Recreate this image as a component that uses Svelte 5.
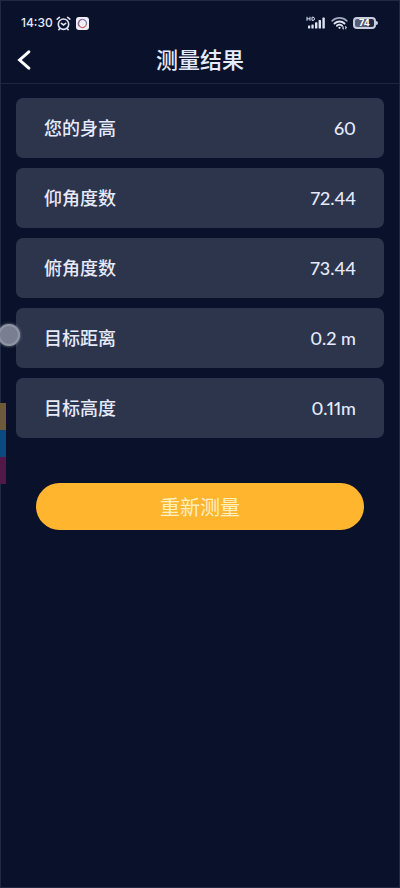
<script>
  const rows = [
    { label: '您的身高', value: '60' },
    { label: '仰角度数', value: '72.44' },
    { label: '俯角度数', value: '73.44' },
    { label: '目标距离', value: '0.2 m' },
    { label: '目标高度', value: '0.11m' }
  ];
</script>

<div class="screen">
  <div class="status">
    <div class="group">
      <span class="time">14:30</span>
      <svg width="15" height="15" viewBox="0 0 15 15" fill="none" stroke="#dfe3f2" stroke-linecap="round">
        <circle cx="7.5" cy="8.2" r="5.2" stroke-width="1.6" />
        <path d="M1.2 3.2 3.4 1.4M13.8 3.2 11.6 1.4M3.8 12.5l-1 1.2M11.2 12.5l1 1.2" stroke-width="1.6" />
        <path d="M5.4 7.4 7.5 9l2.2-1.6" stroke-width="1.6" />
      </svg>
      <svg class="app" width="13" height="13" viewBox="0 0 13 13" fill="none">
        <rect width="13" height="13" rx="3" fill="#f1eff6" />
        <path d="M6.5 2.4a4.1 4.1 0 0 0-2.9 7" stroke="#8f5f92" stroke-width="1.4" />
        <path d="M6.5 2.4a4.1 4.1 0 0 1 4 4.6" stroke="#6d79b4" stroke-width="1.2" />
        <path d="M3.6 9.4a4.1 4.1 0 0 0 6.9-2.4" stroke="#c96a70" stroke-width="1.3" />
      </svg>
    </div>
    <div class="group right">
      <svg width="20" height="14" viewBox="0 0 20 14" fill="#dfe3f2">
        <path d="M1 .8v4M4 .8v4M1 2.8h3M6 1.2v3.2h.9a1.6 1.6 0 0 0 0-3.2z" fill="none" stroke="#dfe3f2" stroke-width="1" />
        <rect x="2" y="9.6" width="2.2" height="2.9" rx=".6" />
        <rect x="5.4" y="8.4" width="2.3" height="4.1" rx=".6" />
        <rect x="9" y="6.2" width="2.4" height="6.3" rx=".6" />
        <rect x="12.6" y="4" width="2.4" height="8.5" rx=".6" />
        <rect x="16.4" y="1.6" width="2.4" height="10.9" rx=".6" />
      </svg>
      <svg width="17" height="14" viewBox="0 0 17 14" fill="none" stroke="#dfe3f2" stroke-linecap="round">
        <path d="M1.2 4.8a10.4 10.4 0 0 1 14.6 0" stroke="#9fa6bd" stroke-width="1.7" />
        <path d="M3.5 7.5a7.2 7.2 0 0 1 10 0" stroke-width="1.9" />
        <path d="M5.9 9.8a4 4 0 0 1 5.2 0" stroke-width="1.8" />
        <circle cx="8.5" cy="11.8" r="1.1" fill="#dfe3f2" stroke="none" />
        <path d="M12.2 10.8v2M12.2 12.8l-.6-.6M14.8 12.8v-2M14.8 10.8l.6.6" stroke-width="1" />
      </svg>
      <div class="battery"><span>74</span></div>
    </div>
  </div>

  <header>
    <button class="back" aria-label="返回">
      <svg width="14" height="20" viewBox="0 0 14 20" fill="none" stroke="#fff" stroke-width="3" stroke-linecap="round">
        <path d="M11.8 1.8 2.6 10l9.2 8.2" />
      </svg>
    </button>
    <h1>测量结果</h1>
  </header>

  <main>
    <dl>
      {#each rows as row}
        <div class="row">
          <dt>{row.label}</dt>
          <dd>{row.value}</dd>
        </div>
      {/each}
    </dl>
    <button class="again">重新测量</button>
  </main>

  <div class="touch"></div>
  <div class="strip"><i></i><i></i><i></i></div>
</div>

<style>
  :global(body) {
    background: #09122a;
  }
  .screen {
    position: relative;
    min-height: 100vh;
    overflow: hidden;
    background: #09122a;
    box-shadow: inset 0 0 0 1px #202a42;
    color: #e6eafa;
    font-family: Lato, "Noto Sans CJK SC", sans-serif;
  }
  .status {
    display: flex;
    justify-content: space-between;
    align-items: center;
    height: 46px;
    padding: 0 24px 0 21px;
  }
  .group {
    display: flex;
    align-items: center;
    gap: 3px;
  }
  .right {
    gap: 5px;
  }
  .time {
    font: 500 12px/16px Inter, sans-serif;
  }
  .app {
    margin-left: 2px;
  }
  .battery {
    position: relative;
    box-sizing: border-box;
    width: 23px;
    height: 12px;
    border: 2px solid #c9cede;
    border-radius: 4px;
    background: linear-gradient(90deg, #565e77 74%, #202a42 74%);
    font: 700 9px/8px Inter, sans-serif;
    text-align: center;
    color: #fff;
  }
  .battery::after {
    content: "";
    position: absolute;
    right: -4px;
    top: 2px;
    width: 2px;
    height: 4px;
    border-radius: 0 2px 2px 0;
    background: #c9cede;
  }
  header {
    display: grid;
    grid-template-columns: 48px 1fr 48px;
    align-items: center;
    height: 38px;
    padding-bottom: 9px;
    border-bottom: 1px solid #1d2742;
    box-sizing: border-box;
  }
  button {
    border: 0;
    cursor: pointer;
    font-family: inherit;
  }
  .back {
    display: flex;
    padding: 0 17px;
    background: none;
  }
  h1 {
    margin: 0;
    font-size: 22px;
    line-height: 28px;
    font-weight: 500;
    text-align: center;
  }
  main {
    padding: 14px 16px 0;
  }
  dl {
    display: flex;
    flex-direction: column;
    gap: 10px;
    margin: 0;
  }
  .row {
    display: flex;
    justify-content: space-between;
    align-items: center;
    height: 60px;
    padding: 0 28px;
    border-radius: 7px;
    background: #2d354d;
  }
  dt, dd {
    margin: 0;
    font-size: 18px;
    line-height: 28px;
    font-weight: 500;
  }
  dd {
    font-variant-numeric: proportional-nums;
  }
  .again {
    display: block;
    width: calc(100% - 40px);
    height: 47px;
    margin: 45px auto 0;
    border-radius: 24px;
    background: #ffb52e;
    color: #fff0c4;
    font-size: 20px;
    line-height: 28px;
  }
  .touch {
    position: absolute;
    left: -2px;
    top: 324px;
    width: 22px;
    height: 22px;
    box-sizing: border-box;
    border: 2px solid #8f95a5;
    border-radius: 50%;
    background: #797f91;
    box-shadow: 0 0 3px #8f95a5;
  }
  .strip {
    position: absolute;
    left: 0;
    top: 403px;
    width: 6px;
  }
  .strip i {
    display: block;
    height: 27px;
    background: #6d5a3a;
  }
  .strip i:nth-child(2) {
    background: #0c4a7c;
  }
  .strip i:nth-child(3) {
    background: #4f1a48;
  }
</style>
